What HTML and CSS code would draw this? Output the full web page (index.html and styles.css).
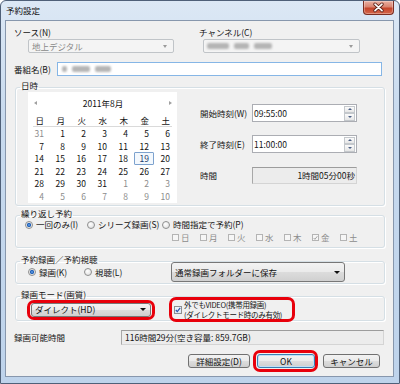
FILE: index.html
```html
<!DOCTYPE html>
<html lang="ja">
<head>
    <meta charset="UTF-8">
    <title>予約設定</title>
    <link rel="stylesheet" href="styles.css">
</head>
<body>
<div class="window">
    <div class="titlebar">
        <span class="title">予約設定</span>
        <span class="close-btn">
            <svg width="29" height="13" viewBox="0 0 29 13">
                <path d="M11 3.2l7 6.4M18 3.2l-7 6.4" stroke="#5a2018" stroke-width="3.4" stroke-linecap="round"/>
                <path d="M11 3.2l7 6.4M18 3.2l-7 6.4" stroke="#fff" stroke-width="1.7" stroke-linecap="round"/>
            </svg>
        </span>
    </div>

    <div class="client">
        <div class="top-row">
            <div>
                <div class="label">ソース(N)</div>
                <div class="combo is-disabled source-combo">
                    <span class="combo-text">地上デジタル</span>
                    <span class="arrow-grey"></span>
                </div>
            </div>
            <div>
                <div class="label">チャンネル(C)</div>
                <div class="combo is-disabled channel-combo">
                    <span class="combo-text">
                        <span class="smudge s22"></span><span class="smudge s15"></span><span class="smudge s18"></span>
                    </span>
                    <span class="arrow-grey"></span>
                </div>
            </div>
        </div>

        <div class="name-row">
            <span class="name-label">番組名(B)</span>
            <div class="name-input">
                <span class="smudge s5"></span><span class="smudge s18"></span><span class="smudge s16"></span>
            </div>
        </div>

        <!-- 日時 -->
        <fieldset class="group date-group">
            <legend>日時</legend>
            <div class="date-body">
                <div class="calendar">
                    <div class="cal-head">
                        <span class="cal-prev"></span>
                        <span>2011年8月</span>
                        <span class="cal-next"></span>
                    </div>
                    <div class="cal-days">
                        <span>日</span><span>月</span><span>火</span><span>水</span><span>木</span><span>金</span><span>土</span>
                    </div>
                    <div class="cal-grid">
                        <span class="other">31</span><span>1</span><span>2</span><span>3</span><span>4</span><span>5</span><span>6</span>
                        <span>7</span><span>8</span><span>9</span><span>10</span><span>11</span><span>12</span><span>13</span>
                        <span>14</span><span>15</span><span>16</span><span>17</span><span>18</span><span class="sel">19</span><span>20</span>
                        <span>21</span><span>22</span><span>23</span><span>24</span><span>25</span><span>26</span><span>27</span>
                        <span>28</span><span>29</span><span>30</span><span>31</span><span class="other">1</span><span class="other">2</span><span class="other">3</span>
                        <span class="other">4</span><span class="other">5</span><span class="other">6</span><span class="other">7</span><span class="other">8</span><span class="other">9</span><span class="other">10</span>
                    </div>
                </div>

                <div class="time-panel">
                    <div class="time-row">
                        <span class="time-label">開始時刻(W)</span>
                        <div class="time-input">
                            <span>09:55:00</span>
                            <span class="spin"><span class="spin-up"></span><span class="spin-down"></span></span>
                        </div>
                    </div>
                    <div class="time-row">
                        <span class="time-label">終了時刻(E)</span>
                        <div class="time-input">
                            <span>11:00:00</span>
                            <span class="spin"><span class="spin-up"></span><span class="spin-down"></span></span>
                        </div>
                    </div>
                    <div class="time-row duration-row">
                        <span class="time-label">時間</span>
                        <div class="readonly duration">1時間05分00秒</div>
                    </div>
                </div>
            </div>
        </fieldset>

        <!-- 繰り返し予約 -->
        <fieldset class="group repeat-group">
            <legend>繰り返し予約</legend>
            <div class="radio-row">
                <span class="option w62"><span class="radio checked"></span>一回のみ(I)</span>
                <span class="option w75"><span class="radio"></span>シリーズ録画(S)</span>
                <span class="option"><span class="radio"></span>時間指定で予約(P)</span>
            </div>
            <div class="day-checks">
                <span class="day"><span class="check"></span>日</span>
                <span class="day"><span class="check"></span>月</span>
                <span class="day"><span class="check"></span>火</span>
                <span class="day"><span class="check"></span>水</span>
                <span class="day"><span class="check"></span>木</span>
                <span class="day"><span class="check">
                    <svg width="6" height="6" viewBox="0 0 6 6"><path d="M0.8 3l1.5 1.6L5.2 0.9" fill="none" stroke="#9a9a9a" stroke-width="1.1"/></svg>
                </span>金</span>
                <span class="day"><span class="check"></span>土</span>
            </div>
        </fieldset>

        <!-- 予約録画／予約視聴 -->
        <fieldset class="group record-group">
            <legend>予約録画／予約視聴</legend>
            <div class="record-row">
                <span class="option w56"><span class="radio checked"></span>録画(K)</span>
                <span class="option w87"><span class="radio"></span>視聴(L)</span>
                <div class="combo dropdown folder-combo">
                    <span class="combo-text">通常録画フォルダーに保存</span>
                    <span class="arrow-black"></span>
                </div>
            </div>
        </fieldset>

        <!-- 録画モード -->
        <fieldset class="group mode-group">
            <legend>録画モード(画質)</legend>
            <div class="mode-row">
                <div class="mark mode-mark">
                    <div class="combo dropdown mode-combo">
                        <span class="combo-text">ダイレクト(HD)</span>
                        <span class="arrow-black"></span>
                    </div>
                </div>
                <div class="mark video-mark">
                    <span class="check blue">
                        <svg width="6" height="6" viewBox="0 0 6 6"><path d="M0.8 3l1.5 1.6L5.2 0.9" fill="none" stroke="#2b55a8" stroke-width="1.2"/></svg>
                    </span>
                    <span class="video-text">
                        <span class="video-line">外でもVIDEO(携帯用録画)</span>
                        <span class="video-line">(ダイレクトモード時のみ有効)</span>
                    </span>
                </div>
            </div>
        </fieldset>

        <div class="avail-row">
            <span class="avail-label">録画可能時間</span>
            <div class="readonly avail">116時間29分(空き容量: 859.7GB)</div>
        </div>

        <div class="button-row">
            <button class="btn detail-btn">詳細設定(D)</button>
            <div class="mark ok-mark">
                <button class="btn default ok-btn">OK</button>
            </div>
            <button class="btn cancel-btn">キャンセル</button>
        </div>
    </div>
</div>
</body>
</html>
```

FILE: styles.css
```css
body {
    margin: 0;
    font-family: "Noto Sans CJK JP", "Noto Sans", sans-serif;
    font-size: 8.5px;
    line-height: 11px;
    color: #151515;
    background: #fff;
}
.window {
    width: 400px;
    height: 384px;
    box-sizing: border-box;
    border: 1px solid #4f6078;
    border-radius: 6px 6px 0 0;
    background: linear-gradient(180deg, #dce8f5 0%, #c8daee 30%, #bed3eb 100%);
    display: flex;
    flex-direction: column;
}
.titlebar {
    height: 19px;
    display: flex;
    align-items: flex-start;
}
.title {
    margin: 4px 0 0 5px;
    color: #111;
}
.close-btn {
    margin-left: auto;
    margin-right: 5px;
    width: 31px;
    height: 14px;
    box-sizing: border-box;
    border: 1px solid #7a2e22;
    border-top: none;
    border-radius: 0 0 4px 4px;
    background: linear-gradient(180deg, #eab0a2 0%, #d98470 45%, #c6442b 55%, #d4684a 100%);
    box-shadow: inset 0 0 0 1px rgba(255, 255, 255, 0.3);
    display: flex;
    align-items: center;
    justify-content: center;
}
.client {
    margin: 0 5px 0 4px;
    height: 357px;
    box-sizing: border-box;
    border: 1px solid #8797ad;
    background: #f0f0f0;
    padding: 0 8px 0 9px;
}

/* top row */
.top-row {
    display: grid;
    grid-template-columns: 185px 1fr;
    margin-top: 6px;
}
.label {
    height: 11px;
    margin-left: -1px;
}
.combo {
    height: 14px;
    box-sizing: border-box;
    display: flex;
    align-items: center;
    justify-content: space-between;
    padding: 0 6px 0 3px;
    margin-top: 1px;
    white-space: nowrap;
}
.combo.is-disabled {
    border: 1px solid #c0c4c8;
    border-radius: 2px;
    background: #f4f4f4;
    color: #8a8a8a;
}
.combo.dropdown {
    border: 1px solid #777;
    border-radius: 3px;
    background: linear-gradient(180deg, #f3f3f3 0%, #ebebeb 48%, #dcdcdc 52%, #d0d0d0 100%);
    color: #111;
    margin-top: 0;
}
.source-combo {
    margin-left: 13px;
    width: 146px;
}
.channel-combo {
    margin-left: 3px;
    width: 157px;
}
.combo-text {
    display: flex;
    align-items: center;
}
.arrow-grey {
    width: 0;
    height: 0;
    border-top: 3px solid #9a9a9a;
    border-left: 2.5px solid transparent;
    border-right: 2.5px solid transparent;
}
.arrow-black {
    width: 0;
    height: 0;
    border-top: 3px solid #111;
    border-left: 3px solid transparent;
    border-right: 3px solid transparent;
}
.smudge {
    display: inline-block;
    height: 6px;
    margin-right: 5px;
    background: #b5b5b5;
    border-radius: 2px;
    filter: blur(0.8px);
}
.s5 { width: 5px; }
.s15 { width: 15px; }
.s16 { width: 16px; }
.s18 { width: 18px; }
.s22 { width: 22px; }

/* name */
.name-row {
    display: flex;
    align-items: center;
    height: 14px;
    margin-top: 9px;
}
.name-label {
    width: 43px;
    margin-left: -1px;
}
.name-input {
    width: 325px;
    height: 14px;
    box-sizing: border-box;
    border: 1px solid #86b6e6;
    background: #fff;
    display: flex;
    align-items: center;
    padding-left: 4px;
}

/* group boxes */
.group {
    margin: 0;
    padding: 0;
    min-width: 0;
    border: 1px solid #d5dfe5;
    border-radius: 3px;
    box-shadow: 1px 1px 0 #fff, inset 1px 1px 0 #fff;
}
.group legend {
    margin-left: 4px;
    padding: 0 1px 4px;
    line-height: 11px;
}
.date-group {
    margin-top: 4px;
    padding-bottom: 2px;
}
.date-body {
    display: flex;
    margin-top: -3px;
    padding-left: 12px;
}

/* calendar */
.calendar {
    width: 149px;
    height: 111px;
    background: #fff;
}
.cal-head {
    height: 22px;
    display: flex;
    align-items: center;
    justify-content: space-between;
    padding: 0 5px 0 6px;
    color: #111;
}
.cal-prev {
    border-right: 3px solid #a0a0a0;
    border-top: 2.5px solid transparent;
    border-bottom: 2.5px solid transparent;
}
.cal-next {
    border-left: 3px solid #a0a0a0;
    border-top: 2.5px solid transparent;
    border-bottom: 2.5px solid transparent;
}
.cal-days,
.cal-grid {
    display: grid;
    grid-template-columns: repeat(7, 21px);
}
.cal-days {
    height: 13px;
    background: linear-gradient(#dadada, #dadada) 5px 100% / 139px 1px no-repeat;
}
.cal-days span,
.cal-grid span {
    text-align: right;
    padding-right: 5px;
}
.cal-days span {
    line-height: 12px;
}
.cal-grid {
    grid-auto-rows: 12.6px;
}
.cal-grid span {
    line-height: 12.6px;
    color: #111;
}
.cal-grid span.other {
    color: #8c8c8c;
}
.cal-grid span.sel {
    margin-left: 1px;
    padding-right: 4px;
    border: 1px solid #7da2ce;
    border-radius: 1px;
    background: #f3f8fd;
    line-height: 10.6px;
    color: #1d3d70;
}

/* time panel */
.time-panel {
    margin-left: 23px;
    padding-top: 12px;
    display: flex;
    flex-direction: column;
}
.time-row {
    display: flex;
    align-items: center;
    height: 18px;
}
.time-row + .time-row {
    margin-top: 13px;
}
.time-row.duration-row {
    margin-top: 14px;
    height: 17px;
}
.time-label {
    width: 52px;
}
.time-input {
    width: 105px;
    height: 18px;
    box-sizing: border-box;
    border: 1px solid #abadb3;
    background: #fff;
    display: flex;
    align-items: center;
    justify-content: space-between;
    padding-left: 1px;
}
.spin {
    width: 11px;
    height: 15px;
    margin-right: 1px;
    display: flex;
    flex-direction: column;
}
.spin-up,
.spin-down {
    flex: 1;
    border: 1px solid #c4c8cc;
    background: linear-gradient(#fbfbfb, #e6e6e6);
    display: flex;
    align-items: center;
    justify-content: center;
}
.spin-up::after {
    content: "";
    border-bottom: 2px solid #4d6185;
    border-left: 2px solid transparent;
    border-right: 2px solid transparent;
}
.spin-down::after {
    content: "";
    border-top: 2px solid #4d6185;
    border-left: 2px solid transparent;
    border-right: 2px solid transparent;
}
.readonly {
    box-sizing: border-box;
    border: 1px solid #d4d4d4;
    border-top-color: #9c9c9c;
    border-left-color: #a8a8a8;
    background: #ececec;
    display: flex;
    align-items: center;
}
.duration {
    width: 105px;
    height: 17px;
    justify-content: flex-end;
    padding-right: 1px;
}

/* radios and checks */
.option {
    display: flex;
    align-items: center;
    white-space: nowrap;
}
.w56 { width: 56px; }
.w62 { width: 62px; }
.w75 { width: 75px; }
.w87 { width: 87px; }
.radio {
    width: 8px;
    height: 8px;
    box-sizing: border-box;
    margin-right: 3px;
    border: 1px solid #8e8f8f;
    border-radius: 50%;
    background: radial-gradient(circle at 40% 35%, #ffffff, #dadada);
}
.radio.checked {
    background: radial-gradient(circle, #6aa8ee 0, #1f5db3 1.8px, #e4e4e4 2.4px, #f8f8f8 100%);
}
.check {
    width: 7px;
    height: 7px;
    box-sizing: border-box;
    margin-right: 2px;
    border: 1px solid #b4b4b4;
    background: #f6f6f6;
    display: inline-flex;
    align-items: center;
    justify-content: center;
}
.check.blue {
    flex: none;
    width: 8px;
    height: 8px;
    border-color: #8e8f8f;
    background: linear-gradient(#eef4fb, #dde9f6);
    margin-right: 2px;
}
.repeat-group {
    margin-top: 2px;
    padding-bottom: 4px;
}
.radio-row {
    display: flex;
    align-items: center;
    height: 11px;
    margin-top: -4px;
    padding-left: 9px;
}
.day-checks {
    display: flex;
    margin-top: 2px;
    margin-left: 156px;
    height: 11px;
    color: #8c8c8c;
}
.day {
    width: 28px;
    display: flex;
    align-items: center;
}
.record-group {
    margin-top: 6px;
    padding-bottom: 1px;
}
.record-row {
    display: flex;
    align-items: center;
    height: 20px;
    margin-top: -7px;
    padding-left: 12px;
}
.folder-combo {
    width: 174px;
    height: 20px;
    padding: 0 4px 0 3px;
}

/* mode */
.mode-group {
    margin-top: 5px;
}
.mode-row {
    display: flex;
    align-items: center;
    height: 25px;
    margin: -7px 0 -2px;
    padding-left: 11px;
}
.mark {
    border: 3px solid #e8000b;
    border-radius: 7px;
    box-sizing: border-box;
}
.mode-mark {
    padding: 0 1px;
}
.mode-combo {
    width: 120px;
    padding: 0 4px 0 3px;
}
.video-mark {
    margin-left: 14px;
    width: 126px;
    height: 25px;
    padding-left: 2px;
    display: flex;
    align-items: center;
}
.video-text {
    display: flex;
    flex-direction: column;
    font-size: 7.5px;
    line-height: 10px;
    letter-spacing: -0.3px;
    white-space: nowrap;
}
.video-line {
    height: 10px;
}

/* bottom */
.avail-row {
    display: flex;
    align-items: center;
    height: 15px;
    margin-top: 9px;
}
.avail-label {
    width: 107px;
    margin-left: -1px;
}
.avail {
    width: 263px;
    height: 15px;
    padding-left: 3px;
}
.button-row {
    display: flex;
    justify-content: flex-end;
    align-items: center;
    height: 21px;
    margin-top: 5px;
    padding-right: 5px;
}
.btn {
    height: 14px;
    box-sizing: border-box;
    padding: 0;
    border: 1px solid #707070;
    border-radius: 3px;
    background: linear-gradient(180deg, #f2f2f2 0%, #ebebeb 48%, #dddddd 52%, #cfcfcf 100%);
    font-family: inherit;
    font-size: 8.5px;
    line-height: 12px;
    color: #111;
}
.btn.default {
    border-color: #3c7fb1;
    box-shadow: inset 0 0 0 1px #bfe0f7;
}
.detail-btn {
    width: 62px;
    margin-right: 3px;
}
.ok-mark {
    padding: 1px 0 1px 1px;
    margin-right: 5px;
}
.ok-btn {
    width: 58px;
}
.cancel-btn {
    width: 57px;
}
```
